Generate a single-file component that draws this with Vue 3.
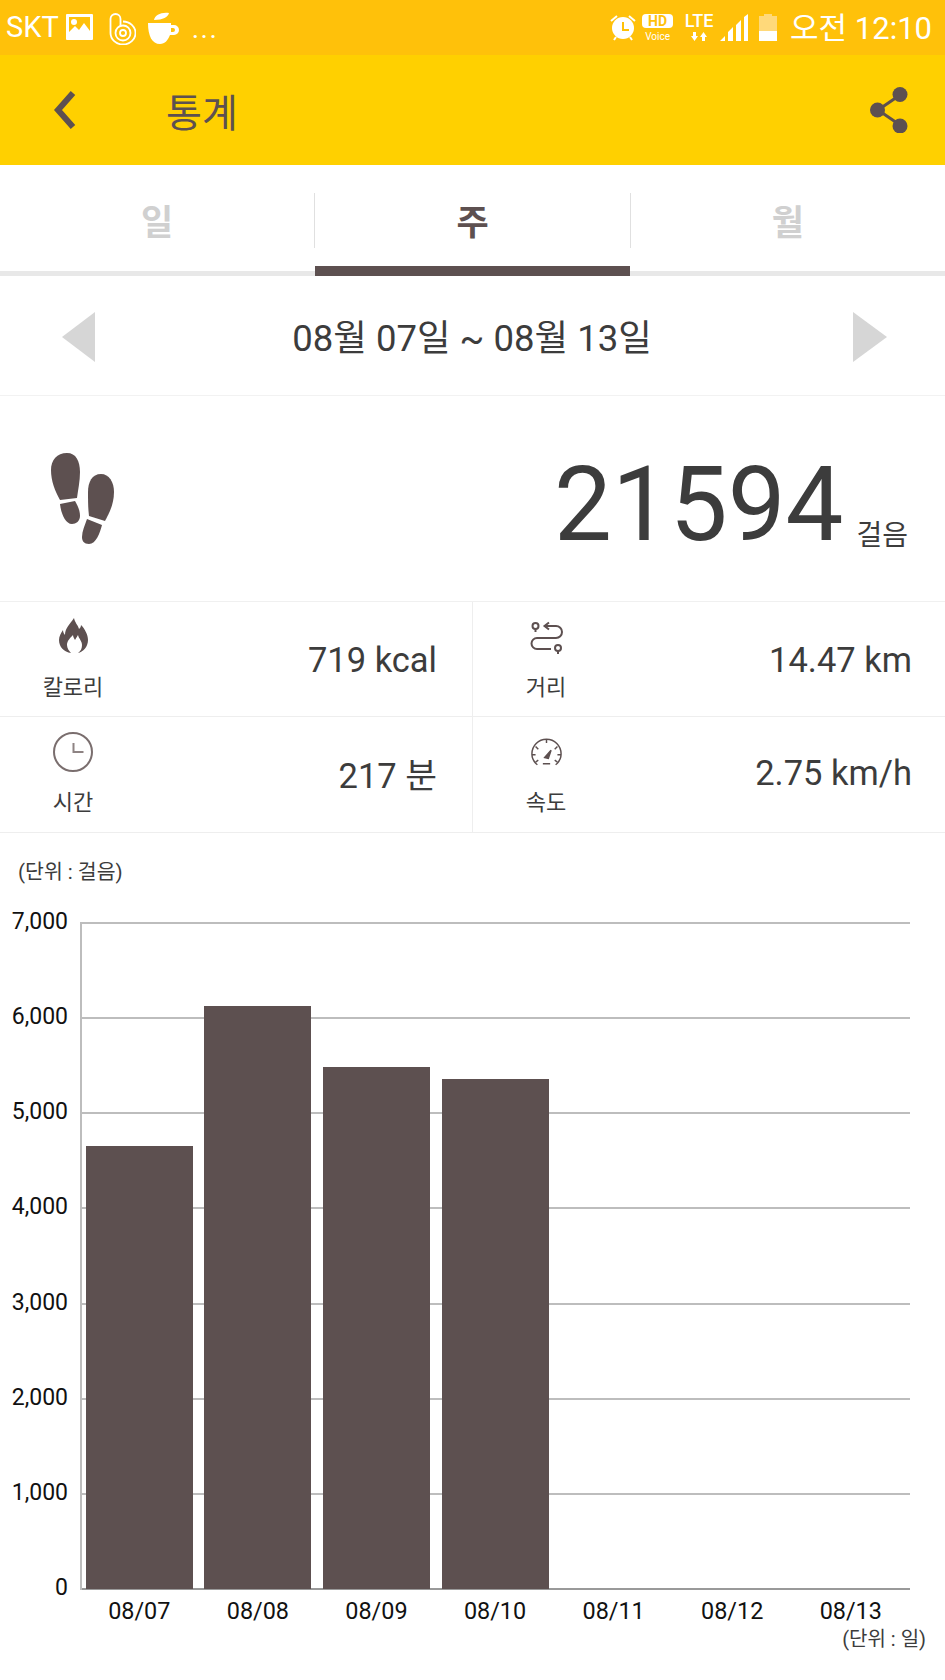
<template>
  <div class="page">
    <div class="status-bar">
      <div class="status-left">
        <span class="carrier">SKT</span>
        <svg class="ic-image" viewBox="0 0 27 26">
          <path fill="#fff" fill-rule="evenodd" d="M1 0h25a1 1 0 0 1 1 1v24a1 1 0 0 1-1 1H1a1 1 0 0 1-1-1V1a1 1 0 0 1 1-1zM3 3v15l6-6 4 4 5-7 6 8V3zM8 5a3 3 0 1 1 0 6a3 3 0 0 1 0-6z" />
        </svg>
        <svg class="ic-b" viewBox="0 0 27 33" fill="none" stroke="#fff" stroke-width="1.800">
          <path d="M1.500 7a5 5 0 0 1 10 0v6" />
          <path d="M1.500 7v14a12.500 11.500 0 1 0 12.500-11.500" />
          <circle cx="14" cy="21" r="7.500" />
          <circle cx="14" cy="21" r="3" />
        </svg>
        <svg class="ic-cup" viewBox="0 0 32 32">
          <path fill="#fff" d="M6 8c1-5 7-8 15-7-1 4-6 7-15 7zM0 11h23v2h3a5 5 0 0 1 0 10h-4c-2 5-5 9-10 9C4 32 0 24 0 11zm23 5v4h2a2 2 0 0 0 0-4z" />
        </svg>
        <span class="more">...</span>
      </div>
      <div class="status-right">
        <svg class="ic-alarm" viewBox="0 0 26 27">
          <circle cx="13" cy="14" r="11" fill="#fff" />
          <path d="M12 8h2v7h5v2h-7z" fill="#ffc107" />
          <path d="M1 7l6-5M25 7l-6-5M4 26l2-3M22 26l-2-3" stroke="#fff" stroke-width="2" fill="none" />
        </svg>
        <div class="hd">
          <span class="hd-pill">HD</span>
          <span class="hd-voice">Voice</span>
        </div>
        <div class="lte">
          <span class="lte-text">LTE</span>
          <svg class="lte-arrows" viewBox="0 0 18 9">
            <path fill="#fff" d="M3 0h3v4h2l-3.500 5L1 4h2zM12 9h3V5h2l-3.500-5L10 5h2z" />
          </svg>
        </div>
        <svg class="ic-signal" viewBox="0 0 28 27">
          <path fill="#fff" d="M0 27l5-5v5zM8 27v-9l5-5v14zM16 27V11l5-5v21zM24 27V3l4-3v27z" />
        </svg>
        <svg class="ic-battery" viewBox="0 0 18 27">
          <path fill="#ffd97a" d="M5 0h8v2h5v15H0V2h5z" />
          <rect y="17" width="18" height="10" fill="#fff" />
        </svg>
        <span class="clock">오전 12:10</span>
      </div>
    </div>

    <header class="app-bar">
      <svg class="ic-back" viewBox="0 0 24 40">
        <path d="M20 3L5 20l15 17" fill="none" stroke="#5d5050" stroke-width="6" />
      </svg>
      <h1 class="title">통계</h1>
      <svg class="ic-share" viewBox="0 0 38 46">
        <path d="M30 8L8 23l22 15" fill="none" stroke="#5d5050" stroke-width="3" />
        <circle cx="30" cy="7.500" r="7.500" fill="#5d5050" />
        <circle cx="7.500" cy="23" r="7.500" fill="#5d5050" />
        <circle cx="30" cy="39" r="7.500" fill="#5d5050" />
      </svg>
    </header>

    <nav class="tabs">
      <div v-for="tab in tabs" :key="tab" class="tab" :class="{ active: tab === activeTab }">
        <span>{{ tab }}</span>
      </div>
    </nav>

    <div class="date-row">
      <span class="arrow arrow-left"></span>
      <span class="date">08월 07일 ~ 08월 13일</span>
      <span class="arrow arrow-right"></span>
    </div>

    <section class="steps">
      <svg class="ic-feet" viewBox="0 0 63 91">
        <g fill="#5d5050">
          <path d="M16 0c9 0 13 8 13 19 0 9-2 18-3 26L9 47C4 38 0 28 0 17 0 7 6 0 16 0z" />
          <path d="M9 51l15-3c3 5 5 10 5 15 0 5-4 8-8 8-7 0-11-11-12-20z" />
          <path d="M50 21c8 0 13 8 13 18 0 11-4 20-9 29l-16-5c-1-9-1-16-1-24 0-10 4-18 13-18z" />
          <path d="M36 66l15 6c-2 8-6 19-13 19-5 0-7-3-7-7 0-6 3-12 5-18z" />
        </g>
      </svg>
      <div class="steps-value">
        <span class="steps-num">21594</span>
        <span class="steps-unit">걸음</span>
      </div>
    </section>

    <section class="stats">
      <div class="stat" v-for="item in stats" :key="item.label">
        <div class="stat-head">
          <div class="stat-icon">
            <svg v-if="item.icon === 'flame'" class="ic-flame" viewBox="0 0 29 35">
              <path fill="#5d5050" fill-rule="evenodd" d="M15 0c1 5 4 7 5 11 1-1 2-2 2-4 4 4 7 10 7 15 0 7-5 12-10 13 3-2 4-5 4-8 0-4-3-6-4-10-1 2-2 3-3 5-1-2-2-3-2-5-3 3-6 6-6 10 0 3 2 6 4 8C5 34 0 29 0 22c0-4 2-7 4-10 0 2 1 4 2 5 0-7 5-11 9-17z" />
            </svg>
            <svg v-else-if="item.icon === 'route'" class="ic-route" viewBox="0 0 33 33" fill="none" stroke="#5d5050" stroke-width="2">
              <circle cx="5.500" cy="5" r="3" />
              <path d="M5.500 8v3" />
              <path d="M19 1.500L14.500 5l4.500 3.500M15 5h11a5.500 5.500 0 0 1 0 12H7a5.500 5.500 0 0 0 0 11h14" />
              <circle cx="28" cy="27" r="3" />
              <path d="M28 30v3" />
            </svg>
            <svg v-else-if="item.icon === 'clock'" class="ic-clock" viewBox="0 0 40 40" fill="none" stroke="#7a6e6e" stroke-width="2">
              <circle cx="20" cy="20" r="19" />
              <path d="M20.500 11v9h10" stroke="#8e8383" />
            </svg>
            <svg v-else class="ic-gauge" viewBox="0 0 34 30" fill="none" stroke="#5d5050" stroke-width="1.600">
              <path d="M7 29C3 26 1 22 1 17a16 16 0 0 1 32 0c0 5-2 9-6 12" />
              <path d="M17 1v4M5 9l3 3M29 9l-3 3M1 18h4M33 18h-4M5 26l3-2M29 26l-3-2M13 28h8" />
              <path d="M15 21l7-8-3 9z" fill="#5d5050" />
            </svg>
          </div>
          <span class="stat-label">{{ item.label }}</span>
        </div>
        <span class="stat-value">{{ item.value }}</span>
      </div>
    </section>

    <section class="chart">
      <div class="unit-y">(단위 : 걸음)</div>
      <div class="plot">
        <div class="grid">
          <div class="grid-row" v-for="tick in ticks" :key="tick">
            <span class="tick">{{ tick }}</span>
            <span class="grid-line"></span>
          </div>
        </div>
        <div class="bars">
          <div class="bar-slot" v-for="day in days" :key="day.label">
            <div v-if="day.steps" class="bar" :style="{ height: (day.steps / 7000) * 100 + '%' }"></div>
          </div>
        </div>
      </div>
      <div class="x-labels">
        <span v-for="day in days" :key="day.label">{{ day.label }}</span>
      </div>
      <div class="unit-x">(단위 : 일)</div>
    </section>
  </div>
</template>

<script setup>
const tabs = ['일', '주', '월']
const activeTab = '주'

const stats = [
  { icon: 'flame', label: '칼로리', value: '719 kcal' },
  { icon: 'route', label: '거리', value: '14.47 km' },
  { icon: 'clock', label: '시간', value: '217 분' },
  { icon: 'gauge', label: '속도', value: '2.75 km/h' }
]

const ticks = ['7,000', '6,000', '5,000', '4,000', '3,000', '2,000', '1,000', '0']

const days = [
  { label: '08/07', steps: 4650 },
  { label: '08/08', steps: 6120 },
  { label: '08/09', steps: 5480 },
  { label: '08/10', steps: 5355 },
  { label: '08/11', steps: 0 },
  { label: '08/12', steps: 0 },
  { label: '08/13', steps: 0 }
]
</script>

<style>
html,
body {
  margin: 0;
  background: #fff;
}
</style>

<style scoped>
* {
  box-sizing: border-box;
}

.page {
  width: 945px;
  height: 1680px;
  overflow: hidden;
  background: #fff;
  font-family: Roboto, 'Noto Sans CJK KR', sans-serif;
  color: #3c3c3c;
}

svg {
  display: block;
  flex: none;
}

/* status bar */
.status-bar {
  height: 55px;
  background: #ffc10a;
  display: flex;
  justify-content: space-between;
  align-items: flex-start;
  color: #fff;
  padding: 14px 13px 0 6px;
}

.status-left,
.status-right {
  display: flex;
  align-items: flex-start;
}

.carrier {
  font-size: 29px;
  line-height: 27px;
}

.ic-image {
  width: 27px;
  height: 26px;
  margin-left: 7px;
}

.ic-b {
  width: 27px;
  height: 33px;
  margin-left: 16px;
  margin-top: -2px;
}

.ic-cup {
  width: 32px;
  height: 32px;
  margin-left: 12px;
  margin-top: -2px;
}

.more {
  font-size: 28px;
  line-height: 30px;
  margin-left: 12px;
  letter-spacing: 1.500px;
}

.ic-alarm {
  width: 26px;
  height: 27px;
}

.hd {
  width: 31px;
  margin-left: 6px;
  display: flex;
  flex-direction: column;
  align-items: center;
}

.hd-pill {
  width: 31px;
  height: 14px;
  border-radius: 4px;
  background: #fff;
  color: #ffc10a;
  font-size: 14px;
  line-height: 14px;
  font-weight: 700;
  text-align: center;
}

.hd-voice {
  font-size: 10px;
  line-height: 12px;
  margin-top: 3px;
}

.lte {
  width: 30px;
  margin-left: 11px;
  display: flex;
  flex-direction: column;
  align-items: center;
}

.lte-text {
  font-size: 18px;
  line-height: 14px;
  font-weight: 500;
}

.lte-arrows {
  width: 18px;
  height: 9px;
  margin-top: 4px;
}

.ic-signal {
  width: 28px;
  height: 27px;
  margin-left: 6px;
}

.ic-battery {
  width: 18px;
  height: 27px;
  margin-left: 11px;
}

.clock {
  font-size: 31px;
  line-height: 30px;
  margin-left: 13px;
  white-space: nowrap;
}

/* app bar */
.app-bar {
  height: 110px;
  background: #ffd000;
  display: flex;
  align-items: center;
  padding: 0 37px 0 53px;
}

.ic-back {
  width: 24px;
  height: 40px;
}

.title {
  margin: 0 0 0 89px;
  flex: 1;
  font-size: 39px;
  font-weight: 400;
  color: #5d5050;
}

.ic-share {
  width: 38px;
  height: 46px;
}

/* tabs */
.tabs {
  height: 111px;
  display: flex;
  border-bottom: 5px solid #e8e8e8;
  padding-top: 28px;
}

.tab {
  flex: 1;
  height: 55px;
  padding-bottom: 3px;
  position: relative;
  display: flex;
  align-items: center;
  justify-content: center;
  font-size: 35px;
  font-weight: 700;
  color: #d0d0d0;
}

.tab + .tab {
  border-left: 1px solid #e0e0e0;
}

.tab.active {
  color: #5d5050;
}

.tab.active::after {
  content: '';
  position: absolute;
  left: 0;
  right: 0;
  top: 45px;
  height: 10px;
  margin-top: 28px;
  background: #5d5050;
}

/* date */
.date-row {
  height: 120px;
  border-bottom: 1px solid #f2f2f2;
  display: flex;
  align-items: center;
  justify-content: space-between;
  padding: 3px 58px 0 62px;
}

.arrow {
  width: 0;
  height: 0;
  border-top: 25.500px solid transparent;
  border-bottom: 25.500px solid transparent;
}

.arrow-left {
  border-right: 33px solid #d6d6d6;
}

.arrow-right {
  border-left: 34px solid #d6d6d6;
}

.date {
  font-size: 36.500px;
  margin: -3px 4px 0 0;
  color: #3c3c3c;
}

/* steps */
.steps {
  height: 206px;
  border-bottom: 1px solid #f0f0f0;
  display: flex;
  align-items: center;
  justify-content: space-between;
  padding: 0 37px 0 51px;
}

.ic-feet {
  width: 63px;
  height: 91px;
}

.steps-value {
  display: flex;
  align-items: flex-end;
  padding-top: 12px;
}

.steps-num {
  font-size: 103px;
  line-height: 1;
  color: #3c3c3c;
}

.steps-unit {
  font-size: 28px;
  line-height: 40px;
  margin-left: 13px;
  color: #3c3c3c;
}

/* stats */
.stats {
  display: grid;
  grid-template-columns: 472px 473px;
  grid-template-rows: 115px 116px;
}

.stat {
  border-bottom: 1px solid #eee;
  display: flex;
  align-items: center;
  justify-content: space-between;
  padding: 0 35px 0 33px;
}

.stat:nth-child(even) {
  border-left: 1px solid #eee;
  padding-right: 33px;
}

.stat-head {
  width: 80px;
  align-self: flex-start;
  padding-top: 12px;
  display: flex;
  flex-direction: column;
  align-items: center;
}

.stat-icon {
  height: 46px;
  display: flex;
  align-items: center;
}

.ic-flame {
  width: 29px;
  height: 35px;
  margin-top: -3px;
}

.ic-route {
  width: 33px;
  height: 33px;
}

.ic-clock {
  width: 40px;
  height: 40px;
}

.ic-gauge {
  width: 31px;
  height: 28px;
}

.stat-label {
  font-size: 22px;
  line-height: 30px;
  margin-top: 13px;
  color: #3c3c3c;
}

.stat-value {
  font-size: 34.500px;
  margin-top: 2px;
  color: #3c3c3c;
}

.stat:nth-child(n + 3) .stat-value {
  margin-top: -4px;
}

/* chart */
.chart {
  padding: 26px 0 0;
  position: relative;
}

.unit-y {
  font-size: 20.500px;
  line-height: 26px;
  margin-left: 18px;
  color: #3c3c3c;
}

.plot {
  position: relative;
  height: 668px;
  margin-top: 37px;
}

.grid {
  height: 100%;
  display: flex;
  flex-direction: column;
  justify-content: space-between;
}

.grid-row {
  height: 2px;
  display: flex;
  align-items: center;
}

.tick {
  width: 68px;
  margin-bottom: 3px;
  text-align: right;
  font-size: 23px;
  color: #111;
}

.grid-line {
  margin-left: 12px;
  width: 830px;
  height: 2px;
  background: #bdbdbd;
}

.grid-row:last-child .grid-line {
  background: #999;
}

.bars {
  position: absolute;
  left: 80px;
  top: 0;
  width: 830px;
  height: 668px;
  box-shadow: inset 2px 0 #bdbdbd;
  display: flex;
  align-items: flex-end;
  padding-bottom: 1px;
}

.bar-slot {
  flex: 1;
  height: 100%;
  display: flex;
  align-items: flex-end;
  justify-content: center;
}

.bar {
  width: 107px;
  background: #5d5050;
}

.x-labels {
  display: flex;
  margin: 7px 0 0 80px;
  width: 830px;
}

.x-labels span {
  flex: 1;
  text-align: center;
  font-size: 23.400px;
  line-height: 28px;
  color: #111;
}

.unit-x {
  font-size: 20px;
  line-height: 24px;
  text-align: right;
  padding-right: 19px;
  margin-top: 2px;
  color: #3c3c3c;
}
</style>
